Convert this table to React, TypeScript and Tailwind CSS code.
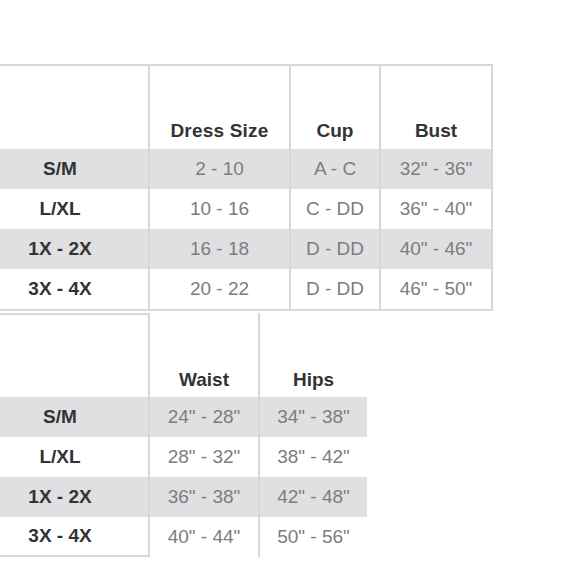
const line = "border-[#d8d8d8]";

type Row = { size: string; values: string[] };

const topRows: Row[] = [
  { size: "S/M", values: ["2 - 10", "A - C", '32" - 36"'] },
  { size: "L/XL", values: ["10 - 16", "C - DD", '36" - 40"'] },
  { size: "1X - 2X", values: ["16 - 18", "D - DD", '40" - 46"'] },
  { size: "3X - 4X", values: ["20 - 22", "D - DD", '46" - 50"'] },
];

const bottomRows: Row[] = [
  { size: "S/M", values: ['24" - 28"', '34" - 38"'] },
  { size: "L/XL", values: ['28" - 32"', '38" - 42"'] },
  { size: "1X - 2X", values: ['36" - 38"', '42" - 48"'] },
  { size: "3X - 4X", values: ['40" - 44"', '50" - 56"'] },
];

export default function App() {
  return (
    <div
      className="w-[580px] h-[580px] bg-white overflow-hidden text-[19px]"
      style={{ fontFamily: '"Liberation Sans", Arial, sans-serif' }}
    >
      {/* Top chart: dress size, cup, bust */}
      <div className={`mt-[64px] w-[493px] border-t-2 border-b-2 ${line}`}>
        <div className="grid grid-cols-[150px_141px_90px_112px] h-[83px]">
          <div className={`border-r-2 ${line}`} />
          <div className={`border-r-2 ${line} flex items-end justify-center pb-[4px] font-bold text-[#333] tracking-[0.2px]`}>
            Dress Size
          </div>
          <div className={`border-r-2 ${line} flex items-end justify-center pb-[4px] font-bold text-[#333]`}>
            Cup
          </div>
          <div className={`border-r-2 ${line} flex items-end justify-center pb-[4px] font-bold text-[#333]`}>
            Bust
          </div>
        </div>
        {topRows.map((r, i) => (
          <div
            key={r.size}
            className={`grid grid-cols-[150px_141px_90px_112px] h-[40px] ${i % 2 === 0 ? "bg-[#e0e0e2]" : "bg-white"}`}
          >
            <div className={`border-r-2 ${line} flex items-center justify-center pr-[28px] font-bold text-[#333]`}>
              {r.size}
            </div>
            {r.values.map((v) => (
              <div key={v} className={`border-r-2 ${line} flex items-center justify-center text-[#7d7d7d]`}>
                {v}
              </div>
            ))}
          </div>
        ))}
      </div>

      {/* Bottom chart: waist, hips */}
      <div className="mt-[2px] w-[367px]">
        <div className="grid grid-cols-[150px_110px_107px] h-[84px]">
          <div className={`border-t-2 border-r-2 ${line}`} />
          <div className={`border-r-2 ${line} flex items-end justify-center pb-[3px] font-bold text-[#333]`}>
            Waist
          </div>
          <div className="flex items-end justify-center pb-[3px] font-bold text-[#333]">Hips</div>
        </div>
        {bottomRows.map((r, i) => (
          <div
            key={r.size}
            className={`grid grid-cols-[150px_110px_107px] h-[40px] ${i % 2 === 0 ? "bg-[#e0e0e2]" : "bg-white"}`}
          >
            <div
              className={`border-r-2 ${line} ${i === 3 ? "border-b-2" : ""} flex items-center justify-center pr-[28px] font-bold text-[#333]`}
            >
              {r.size}
            </div>
            <div className={`border-r-2 ${line} flex items-center justify-center text-[#7d7d7d]`}>{r.values[0]}</div>
            <div className="flex items-center justify-center text-[#7d7d7d]">{r.values[1]}</div>
          </div>
        ))}
      </div>
    </div>
  );
}
